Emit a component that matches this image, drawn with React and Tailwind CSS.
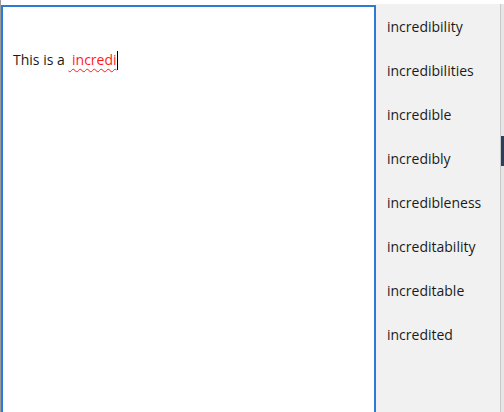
const suggestions = [
  'incredibility',
  'incredibilities',
  'incredible',
  'incredibly',
  'incredibleness',
  'increditability',
  'increditable',
  'incredited',
];

export default function App() {
  return (
    <div className="flex h-[412px] w-[504px] overflow-hidden bg-white text-[14px] text-[#1a1a1a]" style={{ fontFamily: '"Segoe UI", "Open Sans", "Noto Sans", sans-serif' }}>
      <div className="w-px shrink-0 bg-[#9a9a9a]" />
      <div className="mt-[5px] w-[375px] shrink-0 border-2 border-b-0 border-[#2b7bd5] bg-white pl-[10px] pt-[43px]">
        <div className="flex h-[20px] items-center whitespace-pre leading-[20px]">
          <span>This is a </span>
          <span className="text-[#ff1a1a] underline decoration-[#ff1a1a] decoration-wavy decoration-1 underline-offset-[3px]"> incredi</span>
          <span className="inline-block h-[19px] w-px bg-black" />
        </div>
      </div>
      <div className="mt-[4px] flex w-[124px] shrink-0 flex-col bg-[#f1f1f1]">
        {suggestions.map((s) => (
          <div key={s} className="flex h-[44px] items-center pl-[11px]">
            {s}
          </div>
        ))}
      </div>
      <div className="flex w-[4px] shrink-0 flex-col">
        <div className="h-[4px] bg-white" />
        <div className="flex flex-1">
          <div className="w-px bg-[#c8c8c8]" />
          <div className="flex flex-1 flex-col bg-[#e6e6e6]">
            <div className="h-[132px]" />
            <div className="h-[30px] bg-[#2d3e5c]" />
            <div className="flex-1" />
          </div>
        </div>
      </div>
    </div>
  );
}
